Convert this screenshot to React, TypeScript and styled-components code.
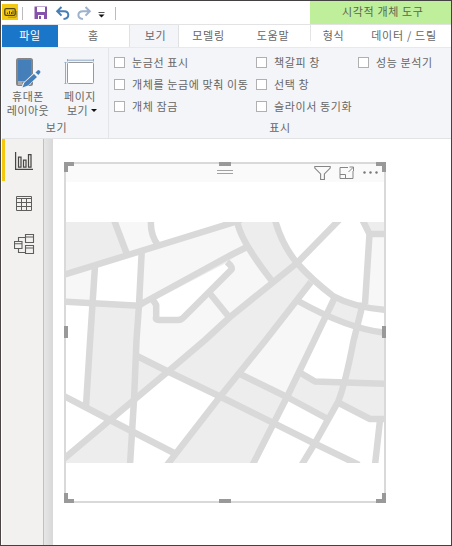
import React from "react";
import styled, { createGlobalStyle, css } from "styled-components";

const Global = createGlobalStyle`
  * { box-sizing: border-box; }
  html, body { margin: 0; padding: 0; background: #fff; }
  body { font-family: "Noto Sans CJK KR", "Noto Sans", sans-serif; font-size: 11px; color: #666; }
  svg { display: block; flex: none; }
`;

const Window = styled.div`
  width: 452px;
  height: 546px;
  border: 1px solid #434141;
  border-left-color: #4a4444;
  display: flex;
  flex-direction: column;
  overflow: hidden;
  background: #fff;
`;

const TitleBar = styled.header`
  height: 23px;
  flex: none;
  display: flex;
  justify-content: space-between;
  padding-left: 1px;
`;

const QuickAccess = styled.div`
  display: flex;
`;

const ContextTitle = styled.div`
  width: 141px;
  background: #c0ef9b;
  color: #59664f;
  line-height: 21px;
  padding-left: 32px;
  letter-spacing: 0.65px;
  white-space: nowrap;
`;

const TabBar = styled.nav`
  height: 23px;
  flex: none;
  display: flex;
  border-top: 1px solid #e3e3e5;
  margin-left: 1px;
`;

const Tab = styled.div<{ $w: number; $kind?: "file" | "active"; $shift?: number }>`
  width: ${(p) => p.$w}px;
  height: 23px;
  flex: none;
  display: flex;
  justify-content: center;
  line-height: 20px;
  white-space: nowrap;
  padding-left: ${(p) => p.$shift ?? 0}px;
  letter-spacing: 0.7px;
  ${(p) => p.$kind === "file" && css`
    background: #1976c9;
    color: #fff;
    height: 22px;
  `}
  ${(p) => p.$kind === "active" && css`
    background: #f4f5f8;
    border: solid #e0e1e3;
    border-width: 0 1px;
  `}
`;

const TabDivider = styled.i`
  width: 1px;
  height: 16px;
  margin-right: -1px;
  background: #e4e4e4;
`;

const Ribbon = styled.section`
  height: 92px;
  flex: none;
  margin-left: 1px;
  display: flex;
  background: #f4f5f8;
  border-top: 1px solid #e8e9eb;
  border-bottom: 1px solid #e2e3e5;
`;

const Group = styled.div<{ $w: number }>`
  width: ${(p) => p.$w}px;
  height: 90px;
  display: flex;
  flex-direction: column;
  justify-content: space-between;
  & + & { border-left: 1px solid #e4e5e8; }
`;

const GroupLabel = styled.div<{ $shift?: number }>`
  height: 20px;
  line-height: 18px;
  text-align: center;
  letter-spacing: 0.7px;
  padding-left: ${(p) => p.$shift ?? 0}px;
`;

const Commands = styled.div`
  display: flex;
  padding-top: 8px;
`;

const Command = styled.div`
  width: 52px;
  display: flex;
  flex-direction: column;
  align-items: center;
`;

const CommandLine = styled.span<{ $indent?: number }>`
  height: 14px;
  line-height: 14px;
  display: flex;
  align-items: center;
  gap: 3px;
  white-space: nowrap;
  letter-spacing: 0.5px;
  padding-left: ${(p) => p.$indent ?? 0}px;
`;

const Caret = styled.i`
  border: solid transparent;
  border-width: 3px 3px 0;
  border-top-color: #111;
`;

const Options = styled.div`
  display: grid;
  grid-template-columns: 142px 102px 84px;
  grid-auto-rows: 22px;
  padding: 3px 0 0 5px;
`;

const Option = styled.label<{ $col: number; $row: number }>`
  grid-column: ${(p) => p.$col};
  grid-row: ${(p) => p.$row};
  display: flex;
  align-items: center;
  gap: 7px;
  white-space: nowrap;
  letter-spacing: 0.6px;
`;

const Box = styled.i`
  width: 11px;
  height: 11px;
  flex: none;
  border: 1px solid #b0b0b0;
  background: #fff;
`;

const Body = styled.main`
  flex: 1;
  display: flex;
  margin-left: 1px;
`;

const SideNav = styled.aside`
  width: 42px;
  display: flex;
  flex-direction: column;
  background: #f3f1ef;
  border-right: 1px solid #bfc0c1;
`;

const NavItem = styled.div<{ $active?: boolean }>`
  height: 42px;
  display: flex;
  align-items: center;
  padding: 2px 0 0 ${(p) => (p.$active ? 9 : 12)}px;
  ${(p) => p.$active && css`border-left: 3px solid #f2c811;`}
`;

const Gutter = styled.div`
  width: 9px;
  background: linear-gradient(90deg, #e6e6e6, #d8d8d8);
`;

const Canvas = styled.div`
  flex: 1;
  padding: 23px 0 0 11px;
`;

const Visual = styled.article`
  position: relative;
  width: 322px;
  height: 341px;
  border: 2px solid #d9d9d9;
`;

const VisualHeader = styled.div`
  height: 18px;
  background: #fafafa;
  display: flex;
  justify-content: flex-end;
`;

const MapArea = styled.div`
  padding-top: 40px;
`;

type Pos = "tl" | "t" | "tr" | "l" | "r" | "bl" | "b" | "br";
const spots: Record<Pos, ReturnType<typeof css>> = {
  tl: css`left: -2px; top: -2px; border-width: 4px 0 0 4px; width: 10px; height: 10px;`,
  tr: css`right: -2px; top: -2px; border-width: 4px 4px 0 0; width: 10px; height: 10px;`,
  bl: css`left: -2px; bottom: -2px; border-width: 0 0 4px 4px; width: 10px; height: 10px;`,
  br: css`right: -2px; bottom: -2px; border-width: 0 4px 4px 0; width: 10px; height: 10px;`,
  t: css`left: 153px; top: -2px; border-width: 4px 0 0; width: 12px;`,
  b: css`left: 153px; bottom: -2px; border-width: 4px 0 0; width: 12px;`,
  l: css`left: -2px; top: 162px; border-width: 0 0 0 4px; height: 12px;`,
  r: css`right: -2px; top: 162px; border-width: 0 0 0 4px; height: 12px;`,
};
const Handle = styled.i<{ $at: Pos }>`
  position: absolute;
  border: 0 solid #999;
  ${(p) => spots[p.$at]}
`;

const white = [
  "152,222 233,222 158,244", "95,267 141,253 139,305 93,302", "66,302 92,303 87,405 66,396",
  "153,301 228,262 232,269 182,320 155,320", "275,222 339,222 297,263 284,245",
  "339,222 362,222 369,233 365,304 333,296 297,263", "311,282 333,296 326,317 298,301",
  "326,317 358,328 343,382 315,381 300,373", "364,306 386,310 386,333 358,328",
  "168,371.5 218,397 174,453 133,433 134,400", "66,396 110,420 66,458", "110,420 134,400 132,431",
  "132,431 174,453 168,464 130,464", "287,397 325,417 314,443 274,423",
  "274,423 314,443 357,464 253,464", "338,402 370,419 386,419 386,464 357,464 314,443",
];
const pale = [
  "115,222 150,222 157,244 126,253", "66,275 95,267 93,302 66,301", "141,252 235,222 247,247 143,303",
  "139,306 153,301 155,320 182,320 209,293 229,317 168,371 136,357",
  "247,247 272,281 230,316 209,293 232,269 228,262", "298,301 326,317 287,397 240,374",
  "369,234 386,234 386,310 365,304",
];
const roads = [
  "M60 276L235 222L242 219", "M114 220L126.5 253", "M151 220Q150 235 158 245",
  "M141.7 252L139 305L136.5 340L134 400L130 465", "M95 266L90 342L86 406", "M60 301.3L139 305.7",
  "M139 305.5L143 303L230 255.5L247 247", "M153 300L156.2 305V317Q155 320 159 320H178Q181.5 320 184 317L208 293L231.5 269.5Q233 267 227 262",
  "M209.5 293L229 317", "M60 462L110 420L168 371.5L205 340L230 317L297 263L341 218",
  "M60 394L110 420L174 453", "M137 356L168 371.5L221 397L313.5 443L359 465",
  "M167 465L219 398L265 341L311 282", "M275 220Q282 245 297 263Q312 280 333 296Q355 308 388 310",
  "M237 220Q239 239 272 281", "M298 301Q350 330 388 333", "M335 297L313 343L287 397L252 466",
  "M363 303L353.5 341Q345 385 338 402L315 443L301 466", "M362 219L369.5 234H388M369.5 234L365 304",
  "M240 374L287 397L326 418", "M299 372L315 381.5L388 384", "M337 402L370 419H388M380 420L375 465",
];

const CityMap = () => (
  <svg width="318" height="241" viewBox="66 222 318 241">
    <path d="M66 222h319v241H66z" fill="#ededed" />
    {white.map((p) => <polygon key={p} points={p} fill="#fff" />)}
    {pale.map((p) => <polygon key={p} points={p} fill="#f7f7f7" />)}
    <g fill="none" stroke="#d9d9d9" strokeWidth="6.5" strokeLinejoin="round">
      {roads.map((d) => <path key={d} d={d} />)}
    </g>
  </svg>
);

const QuickIcons = () => (
  <svg width="116" height="22" viewBox="2 1 116 22" fill="none">
    <path d="M2 4h16v16H2z" fill="#f2c811" />
    <rect x="4.8" y="8.7" width="10.4" height="6.6" rx="1.3" stroke="#51451a" strokeWidth="1.3" />
    <path d="M7.5 14v-1.5M9.5 14v-3M11.5 14v-2M13 14v-3.5" stroke="#51451a" />
    <path d="M8 17.2h7q1.6 0 1.6-1.6V11" stroke="#a98e1d" />
    <path d="M22.5 7v13M115.5 7v13" stroke="#bbb" />
    <path d="M34.5 6.5h12.5v12.5H34.5z" fill="#8651ad" />
    <path d="M37 7h8v5h-8zM38 15h6v4h-6z" fill="#fff" /><path d="M39 16h2v3h-2z" fill="#8651ad" />
    <path d="M61.5 7l-4.3 4.3 4.3 4.3M57.5 11.3h6.5q4.3 0 4.3 3.7 0 3.5-4.8 4" stroke="#467eb5" strokeWidth="2" />
    <path d="M85.5 7l4.3 4.3-4.3 4.3M89.5 11.3H83q-4.6 0-4.6 3.7 0 3.5 4.6 4" stroke="#9eb2ce" strokeWidth="2" />
    <path d="M98.5 12.5h6" stroke="#555" /><path d="M98.5 14.5h6l-3 3z" fill="#111" />
  </svg>
);

const PhoneIcon = () => (
  <svg width="28" height="33" viewBox="18 54 28 33">
    <rect x="21" y="57" width="15" height="26" rx="1.5" fill="#457fb9" stroke="#858585" strokeWidth="2" />
    <path d="M22 79h13v4H22z" fill="#aaa" /><path d="M26 81h4" stroke="#666" />
    <path d="M25 87l2-6 14-13 4 4-14 13z" fill="#f4f5f8" />
    <path d="M26.5 85.5l2-5L38 72l3 3-9 8.5zM39.5 70.5l2-2q1-1 2 0l.5.5q1 1 0 2l-1.7 2z" fill="#457fb9" />
  </svg>
);

const PageIcon = () => (
  <svg width="32" height="33" viewBox="64 54 32 33" fill="none">
    <rect x="67.5" y="60.5" width="26" height="21" rx="1" fill="#fff" stroke="#999" />
    <path d="M67 58.2h27M67.5 57v2.5M93.5 57v2.5M65.5 60v22M64.5 60.5h2M64.5 81.5h2" stroke="#8cacd0" />
  </svg>
);

const ReportIcon = () => (
  <svg width="20" height="20" viewBox="14 151 20 20" fill="none" stroke="#484644" strokeWidth="1.25">
    <path d="M15.6 152v17.4H33M18.5 157h2.5v10h-2.5zM23.5 160h2.5v7h-2.5zM28.5 154.5h2.5V167h-2.5z" />
  </svg>
);
const TableIcon = () => (
  <svg width="20" height="20" viewBox="14 193 20 20" fill="none" stroke="#605e5c">
    <path d="M16.5 196.5h15v14h-15zM16.5 198.5h15M16.5 202.5h15M16.5 206.5h15M21.5 199v11M26.5 199v11" />
  </svg>
);
const ModelIcon = () => (
  <svg width="22" height="22" viewBox="14 235 22 22" fill="none" stroke="#605e5c" strokeWidth="1.1">
    <path d="M14.5 242.5h7.5v7h-7.5zM25.5 235.5h8v8h-8zM25.5 246.5h8v8h-8zM14.5 244.8H22M25.5 238h8M25.5 249h8M18.5 242.5v-4h7M18.5 249.5v4h7" />
  </svg>
);

const HeaderIcons = () => (
  <svg width="184" height="18" viewBox="200 164 184 18" fill="none" stroke="#858585">
    <path d="M217 170.5h16M217 173.5h16" stroke="#a2a2a2" />
    <path d="M314.8 166.5h15.4v1.6l-5.8 5.8v5.6h-3.8v-5.6l-5.8-5.8z" strokeWidth="1.1" />
    <path d="M348 167.5h-8v11h13V171M348.5 172l4.7-4.7M349.5 167h4v4M340 174.5h5.5v4" />
    <g fill="#777" stroke="none"><circle cx="364.5" cy="172.5" r="1.2" /><circle cx="370.5" cy="172.5" r="1.2" /><circle cx="376.5" cy="172.5" r="1.2" /></g>
  </svg>
);

const options: [string, number, number][] = [
  ["눈금선 표시", 1, 1], ["개체를 눈금에 맞춰 이동", 1, 2], ["개체 잠금", 1, 3],
  ["책갈피 창", 2, 1], ["선택 창", 2, 2], ["슬라이서 동기화", 2, 3], ["성능 분석기", 3, 1],
];
const handles: Pos[] = ["tl", "t", "tr", "l", "r", "bl", "b", "br"];

export default function App() {
  return (
    <Window>
      <Global />
      <TitleBar>
        <QuickAccess><QuickIcons /></QuickAccess>
        <ContextTitle>시각적 개체 도구</ContextTitle>
      </TitleBar>
      <TabBar>
        <Tab $w={56} $kind="file">파일</Tab>
        <Tab $w={71}>홈</Tab>
        <Tab $w={50} $kind="active" $shift={3}>보기</Tab>
        <Tab $w={57} $shift={2}>모델링</Tab>
        <Tab $w={74}>도움말</Tab>
        <TabDivider />
        <Tab $w={47}>형식</Tab>
        <Tab $w={94}>데이터 / 드릴</Tab>
      </TabBar>
      <Ribbon>
        <Group $w={106}>
          <Commands>
            <Command>
              <PhoneIcon />
              <CommandLine>휴대폰</CommandLine>
              <CommandLine>레이아웃</CommandLine>
            </Command>
            <Command>
              <PageIcon />
              <CommandLine>페이지</CommandLine>
              <CommandLine $indent={4}>보기<Caret /></CommandLine>
            </Command>
          </Commands>
          <GroupLabel $shift={3}>보기</GroupLabel>
        </Group>
        <Group $w={343}>
          <Options>
            {options.map(([label, col, row]) => (
              <Option key={label} $col={col} $row={row}><Box />{label}</Option>
            ))}
          </Options>
          <GroupLabel>표시</GroupLabel>
        </Group>
      </Ribbon>
      <Body>
        <SideNav>
          <NavItem $active><ReportIcon /></NavItem>
          <NavItem><TableIcon /></NavItem>
          <NavItem><ModelIcon /></NavItem>
        </SideNav>
        <Gutter />
        <Canvas>
          <Visual>
            <VisualHeader><HeaderIcons /></VisualHeader>
            <MapArea><CityMap /></MapArea>
            {handles.map((h) => <Handle key={h} $at={h} />)}
          </Visual>
        </Canvas>
      </Body>
    </Window>
  );
}
